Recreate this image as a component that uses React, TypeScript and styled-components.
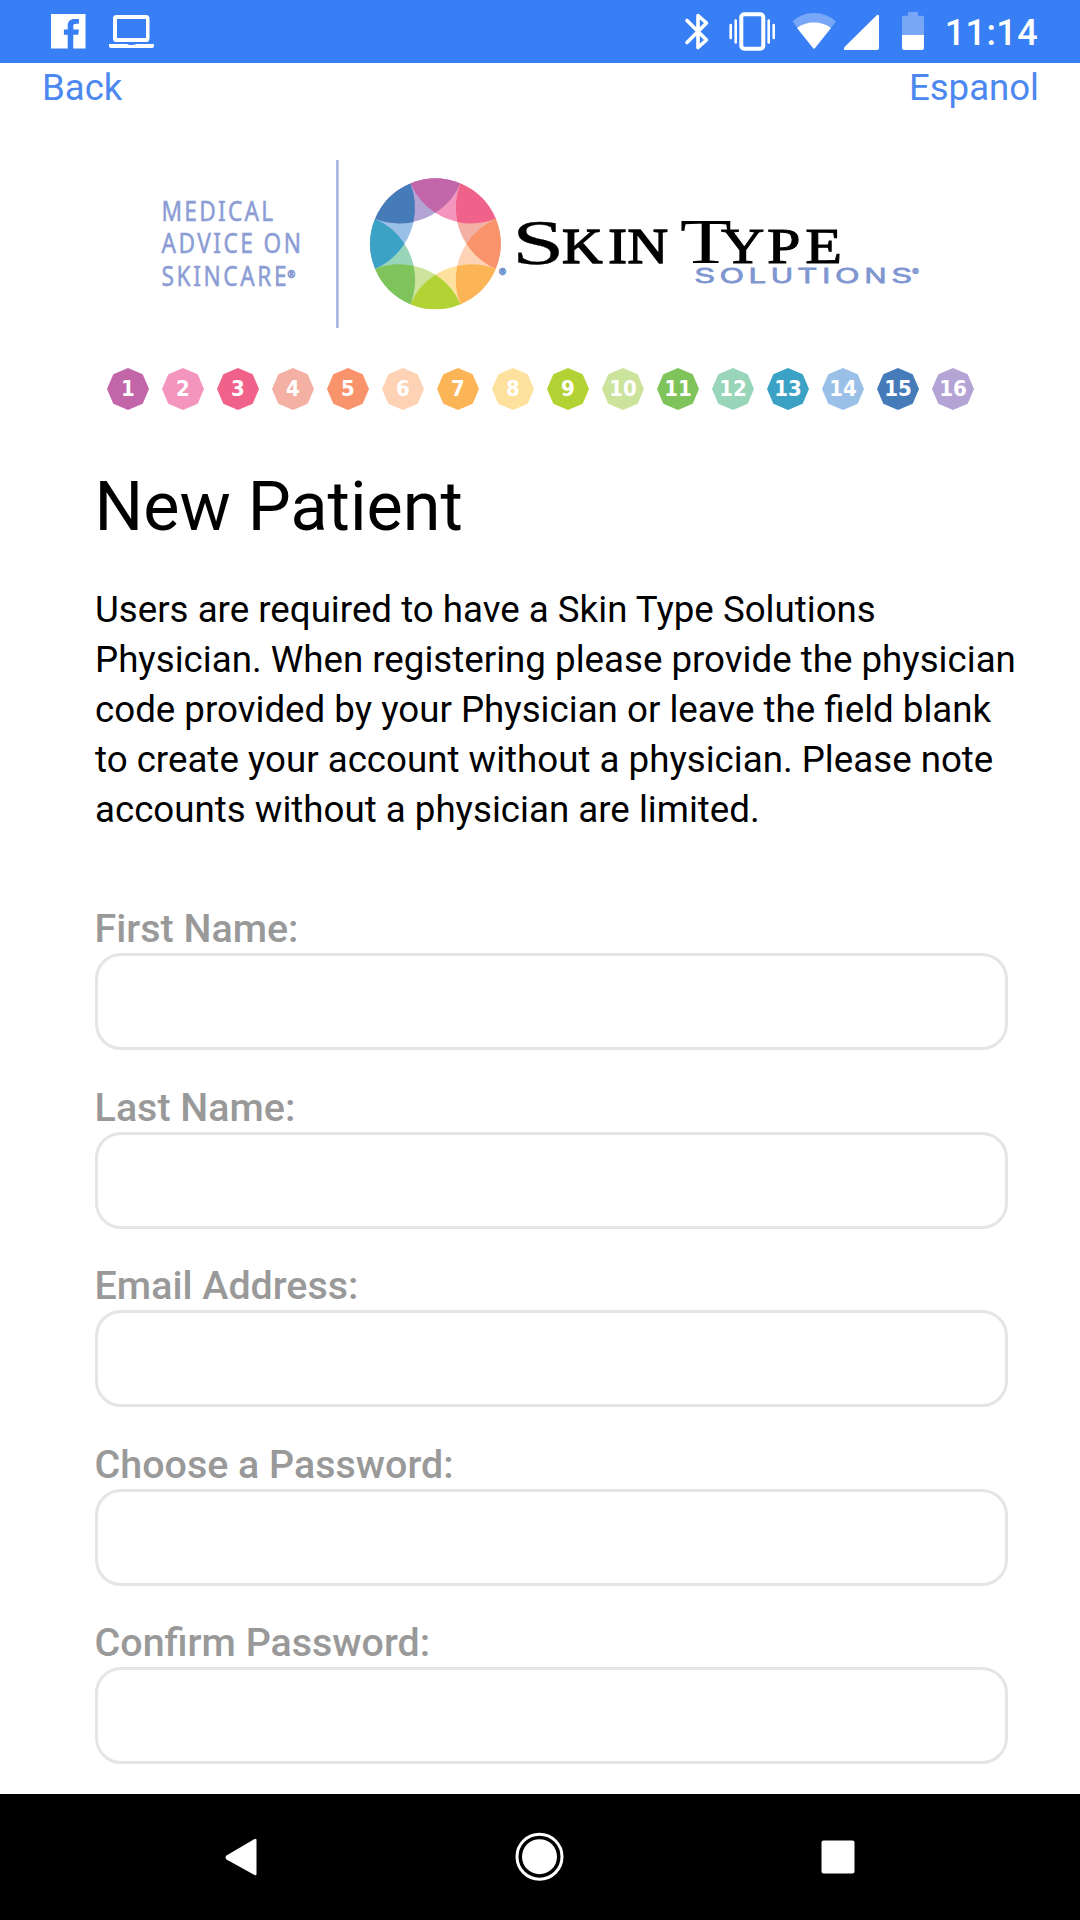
import * as React from 'react';
import { useState } from 'react';
import styled, { createGlobalStyle } from 'styled-components';

const GlobalStyle = createGlobalStyle`
  * {
    box-sizing: border-box;
  }
  body {
    margin: 0;
    background-color: #fff;
    font-family: Roboto, sans-serif;
  }
`;

const Screen = styled.div`
  display: flex;
  flex-direction: column;
  width: 1080px;
  height: 1920px;
  overflow: hidden;
  background-color: #fff;
`;

const StatusBar = styled.div`
  display: flex;
  justify-content: space-between;
  flex-shrink: 0;
  height: 63px;
  background-color: #387ef5;
`;

const StatusIcons = styled.svg`
  display: block;
  height: 63px;
`;

const StatusRight = styled.div`
  display: flex;
  padding-right: 42px;
`;

const Clock = styled.span`
  width: 97px;
  color: #fff;
  font-size: 36px;
  font-weight: 500;
  line-height: 66px;
  letter-spacing: 0.4px;
  text-align: right;
`;

const Header = styled.div`
  display: flex;
  justify-content: space-between;
  flex-shrink: 0;
  height: 72px;
  padding: 4px 41px 0 42px;
`;

const HeaderBtn = styled.button`
  padding: 0;
  height: 42px;
  border: none;
  background: none;
  color: #4d88f0;
  font-family: Roboto, sans-serif;
  font-size: 36.6px;
  line-height: 42px;
`;

const Logo = styled.svg`
  display: block;
  flex-shrink: 0;
  width: 1080px;
  height: 215px;
`;

const Types = styled.div`
  display: flex;
  gap: 13px;
  flex-shrink: 0;
  height: 78px;
  padding: 18px 0 0 107px;
`;

const TypeBadge = styled.div<{ $color: string }>`
  display: flex;
  justify-content: center;
  width: 42px;
  height: 42px;
  background-color: ${(props) => props.$color};
  clip-path: polygon(
    50% 0%,
    85% 15%,
    100% 50%,
    85% 85%,
    50% 100%,
    15% 85%,
    0% 50%,
    15% 15%
  );
  color: #fff;
  font-family: 'DejaVu Sans Condensed', 'DejaVu Sans', sans-serif;
  font-stretch: condensed;
  font-size: 22px;
  font-weight: 700;
  line-height: 42px;
`;

const Form = styled.form`
  flex: 1;
  min-height: 0;
  overflow: hidden;
  padding: 39px 0 0 95px;
`;

const Title = styled.h1`
  margin: 0;
  color: #000;
  font-size: 68.3px;
  font-weight: 400;
  line-height: 80px;
  text-indent: -0.5px;
`;

const Intro = styled.p`
  margin: 38px 0 0;
  color: #000;
  font-size: 36.7px;
  line-height: 50px;
  white-space: nowrap;
`;

const Fields = styled.div`
  display: flex;
  flex-direction: column;
  margin-top: 69px;
`;

const Field = styled.label`
  display: block;
  height: 178.5px;
`;

const LabelText = styled.span`
  display: block;
  height: 49px;
  color: #999;
  font-size: 39.4px;
  font-weight: 500;
  line-height: 50px;
  text-indent: -0.4px;
`;

const Input = styled.input`
  display: block;
  width: 913px;
  height: 97px;
  padding: 0 26px;
  border: 3px solid #e5e5e5;
  border-radius: 26px;
  background-color: #fff;
  font-family: Roboto, sans-serif;
  font-size: 39px;
  &:focus {
    outline: none;
  }
`;

const NavBar = styled.div`
  display: flex;
  justify-content: center;
  align-items: center;
  gap: 234px;
  flex-shrink: 0;
  height: 126px;
  background-color: #000;
`;

const NavIcon = styled.svg`
  width: 64px;
  height: 64px;
  fill: #fff;
`;

const typeColors = [
  '#c266a9',
  '#f495be',
  '#f1628a',
  '#f3b0a3',
  '#f8936c',
  '#fdd2b5',
  '#fbb456',
  '#fee19d',
  '#b3d334',
  '#cbe39b',
  '#7fc35b',
  '#98d5b9',
  '#3ba2c5',
  '#9bc0e8',
  '#467bba',
  '#b3a4d5',
];

const fields = [
  { name: 'firstName', label: 'First Name:', type: 'text' },
  { name: 'lastName', label: 'Last Name:', type: 'text' },
  { name: 'email', label: 'Email Address:', type: 'text' },
  { name: 'password', label: 'Choose a Password:', type: 'password' },
  { name: 'confirm', label: 'Confirm Password:', type: 'password' },
];

const RADIUS = 65.3;
const TIP = 31;
const ARC = 66.5;

const point = (deg: number, r: number) => {
  const a = (deg * Math.PI) / 180;
  return `${(r * Math.sin(a)).toFixed(2)} ${(-r * Math.cos(a)).toFixed(2)}`;
};

// two vertices apart, the light colour under the petals
const lensPath = (deg: number) =>
  `M${point(deg - 45, RADIUS)}A${RADIUS} ${RADIUS} 0 0 1 ${point(deg + 45, RADIUS)}` +
  `A${ARC} ${ARC} 0 0 1 ${point(deg - 45, RADIUS)}Z`;

const petalPath = (deg: number) =>
  `M${point(deg - 22.5, RADIUS)}A${RADIUS} ${RADIUS} 0 0 1 ${point(deg + 22.5, RADIUS)}` +
  `A${ARC} ${ARC} 0 0 1 ${point(deg, TIP)}A${ARC} ${ARC} 0 0 1 ${point(deg - 22.5, RADIUS)}Z`;

const Wheel = () => (
  <g transform='translate(435.4 108.8)'>
    {[0, 1, 2, 3, 4, 5, 6, 7].map((i) => (
      <path key={i} d={lensPath(i * 45 + 22.5)} fill={typeColors[i * 2 + 1]} />
    ))}
    {[0, 1, 2, 3, 4, 5, 6, 7].map((i) => (
      <path key={i} d={petalPath(i * 45)} fill={typeColors[i * 2]} />
    ))}
  </g>
);

const Brand = () => (
  <Logo viewBox='0 0 1080 215'>
    <g
      transform='translate(161.500 0) scale(0.84 1)'
      fill='#8b9dd4'
      stroke='#8b9dd4'
      strokeWidth='0.5'
      fontFamily="'Noto Sans', sans-serif"
      fontSize='27'
    >
      <text x='0' y='86' textLength='133'>MEDICAL</text>
      <text x='0' y='118.500' textLength='166'>ADVICE ON</text>
      <text x='0' y='151' textLength='149'>SKINCARE</text>
      <text x='150' y='143' fontSize='11' strokeWidth='1'>®</text>
    </g>
    <rect x='336.200' y='25' width='2.400' height='168' fill='#9fb0dc' />
    <Wheel />
    <text x='499' y='140' fontSize='9' fontWeight='700' fill='#6f92cf' stroke='#6f92cf' strokeWidth='0.8'>®</text>
    <g fill='#000' stroke='#000' fontFamily="'Liberation Serif', serif">
      <g transform='translate(512 128.500) scale(1.5 1)'>
        <text fontSize='63' strokeWidth='0.3'>S</text>
      </g>
      <g transform='translate(562 127.500) scale(1.1 1)'>
        <text x='0 42 59.500' fontSize='51' strokeWidth='1.4'>KIN</text>
      </g>
      <g transform='translate(680 128) scale(1.34 1)'>
        <text fontSize='63' strokeWidth='0.1'>T</text>
      </g>
      <g transform='translate(721 127.500) scale(1.18 1)'>
        <text x='0 39 71.500' fontSize='51' strokeWidth='1'>YPE</text>
      </g>
    </g>
    <g fill='#7f96d0' stroke='#7f96d0' fontFamily="'Liberation Sans', sans-serif">
      <g transform='translate(694.500 148.300) scale(1.35 1)' strokeWidth='0.8'>
        <text fontSize='22.500' textLength='161'>SOLUTIONS</text>
      </g>
      <text x='912.500' y='139' fontSize='8' strokeWidth='0.8'>®</text>
    </g>
  </Logo>
);

const App = () => {
  const [values, setValues] = useState<Record<string, string>>({});

  const handleChange = (e: React.ChangeEvent<HTMLInputElement>) => {
    setValues({ ...values, [e.target.name]: e.target.value });
  };

  return (
    <Screen>
      <GlobalStyle />
      <StatusBar>
        <StatusIcons width='200' viewBox='0 0 200 63' fill='#fff'>
          <path d='M51 14h34.500v34.500H73.300V34.800h4.900l.7-5.300h-5.600v-3.200c0-1.800.8-2.500 2.600-2.500h3V19h-4.200c-4.600 0-7 2.600-7 6.800V29.500h-3.800v5.300h3.800v13.700H51z' />
          <path
            fillRule='evenodd'
            d='M116.500 15h29.500a3.500 3.500 0 0 1 3.500 3.500V38.500a3.500 3.500 0 0 1-3.500 3.500H116.500a3.500 3.500 0 0 1-3.500-3.500V18.500a3.500 3.500 0 0 1 3.500-3.500zM117 19v19h29V19z'
          />
          <path d='M109 44h18q1 1 4.500 1t4.500-1h18v2q0 2-2 2H111q-2 0-2-2z' />
        </StatusIcons>
        <StatusRight>
          <StatusIcons width='261' viewBox='680 0 261 63' fill='#fff'>
            <path
              d='M687 20.500L706.500 40L698 47.500V15.500L706.500 23L687 42.500'
              fill='none'
              stroke='#fff'
              strokeWidth='3.600'
              strokeLinecap='round'
              strokeLinejoin='round'
            />
            <rect x='741.300' y='14.300' width='22' height='34.400' rx='3' fill='none' stroke='#fff' strokeWidth='4' />
            <path
              d='M730.700 25v13M735.700 20.500v22M768.700 20.500v22M773.700 25v13'
              fill='none'
              stroke='#fff'
              strokeWidth='2.600'
              strokeLinecap='round'
            />
            <path d='M792.500 21.500Q801 13 814 13T836 21.500L815 48Q814 49.500 813 48z' fillOpacity='0.32' />
            <path d='M797 28Q804 22.500 814 22.500T831 28L815 48Q814 49.500 813 48z' />
            <path d='M845 50Q843 49.500 844.500 47L876.500 15.500Q879 13.500 879 16.500V48Q879 50 877 50z' />
            <path d='M902 35V17.500Q902 15.700 904 15.700h4V12h10v3.700h4q2 0 2 1.800V35z' fillOpacity='0.32' />
            <path d='M902 35h22v13q0 2-2 2H904q-2 0-2-2z' />
          </StatusIcons>
          <Clock>11:14</Clock>
        </StatusRight>
      </StatusBar>
      <Header>
        <HeaderBtn type='button'>Back</HeaderBtn>
        <HeaderBtn type='button'>Espanol</HeaderBtn>
      </Header>
      <Brand />
      <Types>
        {typeColors.map((color, i) => (
          <TypeBadge key={color} $color={color}>
            {i + 1}
          </TypeBadge>
        ))}
      </Types>
      <Form>
        <Title>New Patient</Title>
        <Intro>
          Users are required to have a Skin Type Solutions
          <br />
          Physician. When registering please provide the physician
          <br />
          code provided by your Physician or leave the field blank
          <br />
          to create your account without a physician. Please note
          <br />
          accounts without a physician are limited.
        </Intro>
        <Fields>
          {fields.map((f) => (
            <Field key={f.name}>
              <LabelText>{f.label}</LabelText>
              <Input
                type={f.type}
                name={f.name}
                value={values[f.name] || ''}
                onChange={handleChange}
              />
            </Field>
          ))}
        </Fields>
      </Form>
      <NavBar>
        <NavIcon viewBox='0 0 64 64'>
          <path d='M46.500 15v34q0 2-2 1L16.500 34.500q-2-2 0-4L44.500 14q2-1 2 1z' />
        </NavIcon>
        <NavIcon viewBox='0 0 64 64'>
          <circle cx='31.500' cy='31.700' r='22.500' fill='none' stroke='#fff' strokeWidth='3' />
          <circle cx='31.500' cy='31.700' r='17.500' />
        </NavIcon>
        <NavIcon viewBox='0 0 64 64'>
          <rect x='15.500' y='15.500' width='33' height='33' rx='2' />
        </NavIcon>
      </NavBar>
    </Screen>
  );
};

export default App;
